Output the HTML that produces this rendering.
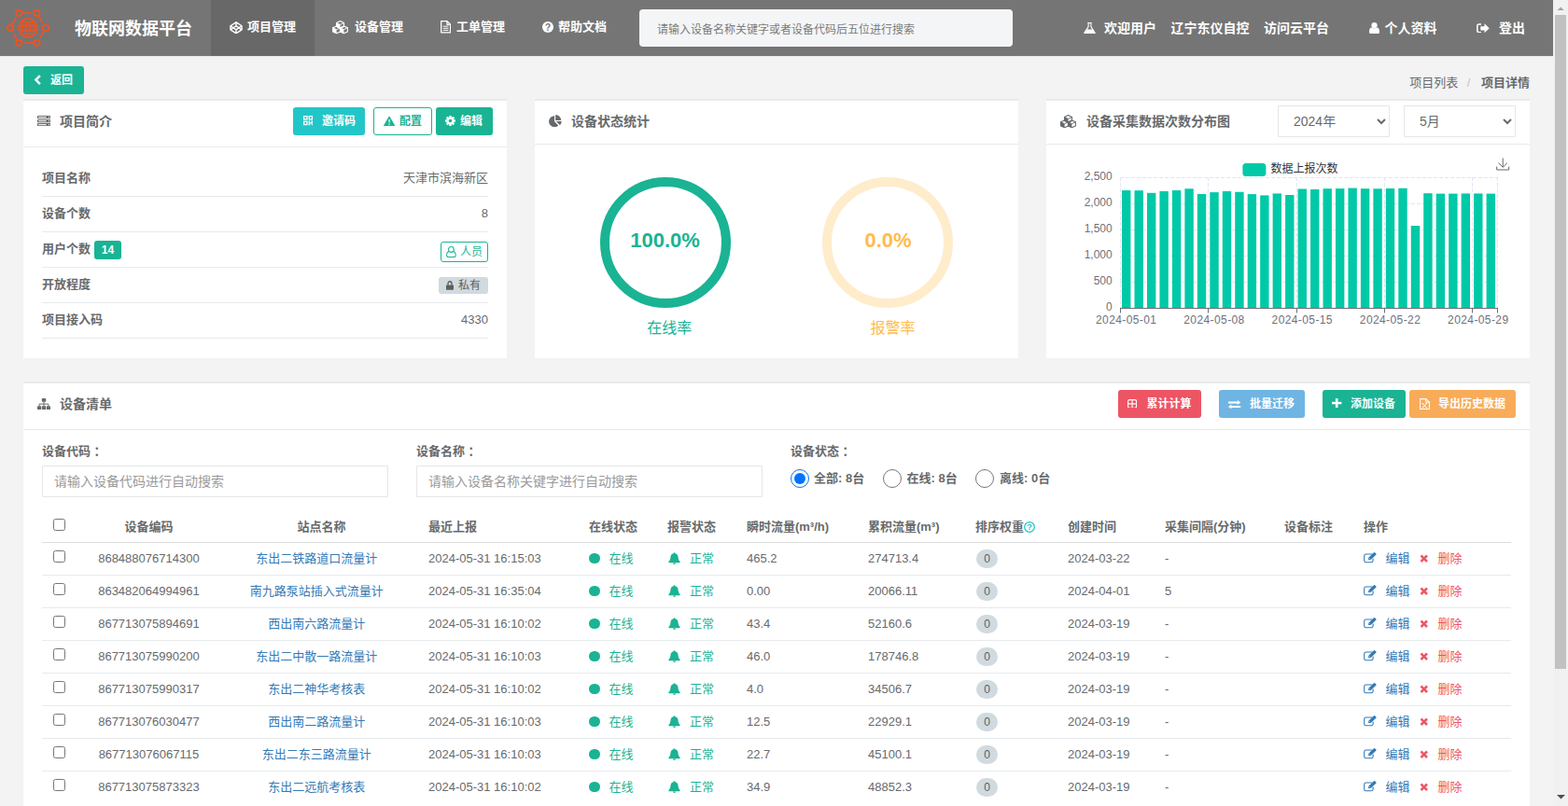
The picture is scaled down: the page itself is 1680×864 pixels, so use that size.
<!DOCTYPE html>
<html lang="zh-CN">
<head>
<meta charset="utf-8">
<title>物联网数据平台 - 项目详情</title>
<style>
*{box-sizing:border-box;margin:0;padding:0}
html,body{width:1680px;height:864px;overflow:hidden}
body{background:#f3f3f4;font-family:"Liberation Sans","Noto Sans CJK SC",sans-serif;font-size:13px;color:#676a6c;position:relative}
svg.ic{display:block;position:absolute}
#nav{position:absolute;left:0;top:0;width:1664px;height:61px;background:#757575;color:#fff;border-bottom:1px solid #e7eaec}
#nav .brand{position:absolute;left:80px;top:1px;line-height:60px;font-size:18px;font-weight:bold;white-space:nowrap}
#nav .item{position:absolute;display:block;color:#fff;top:0;height:60px;line-height:60px;font-size:13px;font-weight:bold;white-space:nowrap}
#nav .item.active{background:#686868}
#nav .item span{position:absolute;top:-1px}
#nav .r{position:absolute;color:#fff;top:0;line-height:60px;font-size:14px;font-weight:bold;white-space:nowrap}
#search{position:absolute;left:685px;top:10px;width:400px;height:40px;border:0;border-radius:4px;background:#f4f5f7;color:#676a6c;font:12px "Liberation Sans","Noto Sans CJK SC",sans-serif;padding:3px 19px 0;outline:0}
#search::placeholder{color:#7b7b7b;opacity:1}
#sb{position:absolute;left:1664px;top:0;width:16px;height:864px;background:#f1f1f1}
#sb .thumb{position:absolute;left:2px;top:16px;width:12px;height:701px;background:#c1c1c1}
.btn{position:absolute;display:block;height:30px;border:0;padding:0;border-radius:3px;color:#fff;font:bold 12px/30px "Liberation Sans","Noto Sans CJK SC",sans-serif;white-space:nowrap;text-align:left}
.btn span{position:absolute;top:0}
.card{position:absolute;background:#fff;border-top:2px solid #e7eaec}
.hline{position:absolute;height:1px;background:#e7eaec}
.title{position:absolute;font-size:14px;font-weight:bold;line-height:20px;white-space:nowrap;color:#676a6c}
#crumb{position:absolute;top:79px;right:41px;line-height:20px;font-size:13px;white-space:nowrap}
.t{position:absolute;white-space:nowrap}
.lbl{position:absolute;font-weight:bold;font-size:13px;line-height:20px;white-space:nowrap}
.val{position:absolute;right:20px;font-size:13px;line-height:20px;white-space:nowrap;text-align:right}
select.sel{position:absolute;top:5px;width:120px;height:34px;border:1px solid #e5e6e7;border-radius:1px;background:#fff;font:14px "Liberation Sans","Noto Sans CJK SC",sans-serif;padding:6px 12px;color:#676a6c;outline:0}
input.inp{position:absolute;top:88px;width:371px;height:34px;border:1px solid #e5e6e7;border-radius:1px;background:#fff;font:14px "Liberation Sans","Noto Sans CJK SC",sans-serif;padding:6px 12px;color:#676a6c;outline:0}
input.inp::placeholder{color:#9a9a9a;opacity:1}
input.radio{position:absolute;width:20px;height:20px;margin:0}
table{position:absolute;left:20px;top:134px;width:1574px;border-collapse:separate;border-spacing:0;table-layout:fixed;font-size:13px}
th,td{padding:0 8px;text-align:left;white-space:nowrap;overflow:visible;position:relative}
th{height:37px;padding-top:3px;line-height:33px;font-weight:bold;border-bottom:1px solid #ddd;vertical-align:top}
td{height:35px;line-height:33px;border-bottom:1px solid #e7eaec;vertical-align:top}
tbody tr:last-child td{border-bottom-color:transparent}
.c{text-align:center}
.colon{margin-left:3.5px}
input.cb{position:absolute;left:12px;width:13px;height:13px;margin:0}
a{color:#337ab7;text-decoration:none}
.g{color:#1ab394}
.red{color:#ed5565}
.dot{position:absolute;left:8.4px;top:10.8px;width:11.4px;height:11.4px;border-radius:50%;background:#1ab394}
.pill{position:absolute;left:9px;top:7px;width:23px;height:20px;border-radius:10px;background:#d1dade;color:#5e5e5e;font-size:12px;line-height:20px;text-align:center}
</style>
</head>
<body>
<nav id="nav"><svg class="ic" style="left:0;top:0" width="60" height="60" viewBox="0 0 60 60"><line x1="24.00" y1="14.00" x2="33.10" y2="14.00" stroke="#f4511e" stroke-width="1.7"/><line x1="41.25" y1="17.09" x2="45.76" y2="24.60" stroke="#f4511e" stroke-width="1.7"/><line x1="47.15" y1="33.09" x2="42.64" y2="40.60" stroke="#f4511e" stroke-width="1.7"/><line x1="35.80" y1="46.00" x2="26.70" y2="46.00" stroke="#f4511e" stroke-width="1.7"/><line x1="18.58" y1="42.90" x2="14.19" y2="35.43" stroke="#f4511e" stroke-width="1.7"/><line x1="12.82" y1="26.90" x2="17.21" y2="19.43" stroke="#f4511e" stroke-width="1.7"/><circle cx="20.4" cy="14" r="3.2" fill="none" stroke="#f4511e" stroke-width="1.7"/><circle cx="39.4" cy="14" r="3.2" fill="none" stroke="#f4511e" stroke-width="1.7"/><circle cx="49" cy="30" r="3.2" fill="none" stroke="#f4511e" stroke-width="1.7"/><circle cx="39.4" cy="46" r="3.2" fill="none" stroke="#f4511e" stroke-width="1.7"/><circle cx="20.4" cy="46" r="3.2" fill="none" stroke="#f4511e" stroke-width="1.7"/><circle cx="11" cy="30" r="3.2" fill="none" stroke="#f4511e" stroke-width="1.7"/><circle cx="30" cy="30" r="10.7" fill="#f4511e"/><g fill="none" stroke="#757575" stroke-width="0.9"><ellipse cx="30" cy="30" rx="4.4" ry="8.7"/><circle cx="30" cy="30" r="8.7"/><line x1="30" y1="21.3" x2="30" y2="38.7"/><line x1="21.3" y1="30" x2="38.7" y2="30"/><line x1="22.6" y1="25.5" x2="37.4" y2="25.5"/><line x1="22.6" y1="34.5" x2="37.4" y2="34.5"/></g></svg><div class="brand">物联网数据平台</div><a class="item active" style="left:226px;width:111px"><span style="left:39px">项目管理</span></a><a class="item" style="left:337px;width:115px"><span style="left:43px">设备管理</span></a><a class="item" style="left:452px;width:109px"><span style="left:37px">工单管理</span></a><a class="item" style="left:561px;width:109px"><span style="left:37px">帮助文档</span></a><svg class="ic" style="left:245.5px;top:22.6px" width="14" height="13.6" viewBox="0 0 14 14"><g fill="none" stroke="#fff" stroke-width="1.5" stroke-linejoin="round"><path d="M7 0.8 L13.2 4.9 V9.1 L7 13.2 L0.8 9.1 V4.9 Z"/><path d="M0.8 4.9 L7 9.1 L13.2 4.9 M0.8 9.1 L7 4.9 L13.2 9.1 M7 0.8 V4.9 M7 9.1 V13.2"/></g></svg><svg class="ic" style="left:356.3px;top:22.4px" width="17" height="14.4" viewBox="0 0 17 14.4"><path d="M8.5 0.6 L12.5 2.5 V6.6 L8.5 8.5 L4.5 6.6 V2.5Z" fill="none" stroke="#fff" stroke-width="1.1" stroke-linejoin="round"/><path d="M4.5 2.5 L8.5 4.3999999999999995 V8.5 L4.5 6.6Z" fill="#fff"/><path d="M4.5 2.5 L8.5 4.3999999999999995 L12.5 2.5" fill="none" stroke="#fff" stroke-width="0.9"/><path d="M4.6 5.9 L8.6 7.800000000000001 V11.9 L4.6 13.799999999999999 L0.5999999999999996 11.9 V7.800000000000001Z" fill="none" stroke="#fff" stroke-width="1.1" stroke-linejoin="round"/><path d="M0.5999999999999996 7.800000000000001 L4.6 9.7 V13.799999999999999 L0.5999999999999996 11.9Z" fill="#fff"/><path d="M0.5999999999999996 7.800000000000001 L4.6 9.7 L8.6 7.800000000000001" fill="none" stroke="#fff" stroke-width="0.9"/><path d="M12.4 5.9 L16.4 7.800000000000001 V11.9 L12.4 13.799999999999999 L8.4 11.9 V7.800000000000001Z" fill="none" stroke="#fff" stroke-width="1.1" stroke-linejoin="round"/><path d="M8.4 7.800000000000001 L12.4 9.7 V13.799999999999999 L8.4 11.9Z" fill="#fff"/><path d="M8.4 7.800000000000001 L12.4 9.7 L16.4 7.800000000000001" fill="none" stroke="#fff" stroke-width="0.9"/></svg><svg class="ic" style="left:471.6px;top:22.3px" width="11.5" height="13.5" viewBox="0 0 11.5 13.5"><g fill="none" stroke="#fff" stroke-width="1.3" stroke-linejoin="round"><path d="M0.7 0.7 H7 L10.6 4.3 V12.8 H0.7 Z"/><path d="M7 0.7 V4.3 H10.6"/><path d="M2.8 6.2 H8.5 M2.8 8.3 H8.5 M2.8 10.4 H8.5" stroke-width="1"/></g></svg><svg class="ic" style="left:580.5px;top:23.1px" width="12" height="12" viewBox="0 0 12 12"><circle cx="6.0" cy="6.0" r="6.0" fill="#fff"/><text x="6.0" y="9.60" text-anchor="middle" font-family="Liberation Sans, sans-serif" font-weight="bold" font-size="10" fill="#757575">?</text></svg><svg class="ic" style="left:1161px;top:23.8px" width="13" height="12.5" viewBox="0 0 13 12.5"><path d="M4.3 0.5 H8.7 M5.1 0.5 V4.6 L0.9 11 Q0.4 12 1.6 12 H11.4 Q12.6 12 12.1 11 L7.9 4.6 V0.5" fill="none" stroke="#fff" stroke-width="1.1" stroke-linejoin="round"/><path d="M3.5 7.6 H9.5 L12 11.2 Q12.3 12 11.4 12 H1.6 Q0.7 12 1 11.2 Z" fill="#fff"/></svg><svg class="ic" style="left:1467px;top:23.7px" width="11" height="12.5" viewBox="0 0 11 12.5"><circle cx="5.5" cy="3.2" r="3.1" fill="#fff"/><path d="M0 10.2 Q0 5.6 2.6 5.4 Q5.5 7.3 8.4 5.4 Q11 5.6 11 10.2 Q11 12.2 9 12.2 H2 Q0 12.2 0 10.2Z" fill="#fff"/></svg><svg class="ic" style="left:1582.4px;top:24.8px" width="14" height="10.6" viewBox="0 0 14 10.6"><path d="M5 0.9 H2.7 Q0.8 0.9 0.8 2.8 V7.8 Q0.8 9.7 2.7 9.7 H5" fill="none" stroke="#fff" stroke-width="1.5"/><path d="M4.3 3.2 H8.5 V0.3 L13.7 5.3 L8.5 10.3 V7.4 H4.3Z" fill="#fff"/></svg><input id="search" type="text" placeholder="请输入设备名称关键字或者设备代码后五位进行搜索"><a class="r" style="left:1183px">欢迎用户</a><a class="r" style="left:1254.5px">辽宁东仪自控</a><a class="r" style="left:1354px">访问云平台</a><a class="r" style="left:1483.5px">个人资料</a><a class="r" style="left:1606px">登出</a></nav><button type="button" class="btn" style="left:25px;top:71px;width:65px;background:#1ab394"><svg class="ic" style="left:11.3px;top:8.9px" width="9" height="11.5" viewBox="0 0 9 11.5"><path d="M6.9 1.1 L2.4 5.6 L6.9 10.1" fill="none" stroke="#fff" stroke-width="2.5"/></svg><span style="left:29px">返回</span></button><div id="crumb"><span>项目列表</span><span style="color:#c4c4c4;padding:0 11.5px 0 9.5px">/</span><b>项目详情</b></div><div class="card" style="left:25px;top:106px;width:518px;height:278px"><svg class="ic" style="left:14.700000000000003px;top:16.200000000000003px" width="14.4" height="11.2" viewBox="0 0 14.4 11.2"><rect x="0" y="0.00" width="14.4" height="3.1" rx="0.4" fill="#676a6c"/><rect x="1.1" y="1.00" width="8.6" height="1.1" fill="#fff"/><rect x="12" y="1.00" width="1.2" height="1.1" fill="#fff"/><rect x="0" y="4.05" width="14.4" height="3.1" rx="0.4" fill="#676a6c"/><rect x="1.1" y="5.05" width="8.6" height="1.1" fill="#fff"/><rect x="12" y="5.05" width="1.2" height="1.1" fill="#fff"/><rect x="0" y="8.10" width="14.4" height="3.1" rx="0.4" fill="#676a6c"/><rect x="1.1" y="9.10" width="8.6" height="1.1" fill="#fff"/><rect x="12" y="9.10" width="1.2" height="1.1" fill="#fff"/></svg><div class="title" style="left:39px;top:12px">项目简介</div><button type="button" class="btn" style="left:289px;top:7px;width:77px;background:#23c6c8"><svg class="ic" style="left:10.5px;top:9.4px" width="10.4" height="10.4" viewBox="0 0 10.4 10.4"><rect x="0" y="0" width="4.6" height="4.6" fill="#fff"/><rect x="1.3" y="1.3" width="2" height="2" fill="#23c6c8"/><rect x="5.6" y="0" width="4.6" height="4.6" fill="#fff"/><rect x="6.8999999999999995" y="1.3" width="2" height="2" fill="#23c6c8"/><rect x="0" y="5.6" width="4.6" height="4.6" fill="#fff"/><rect x="1.3" y="6.8999999999999995" width="2" height="2" fill="#23c6c8"/><path d="M5.6 5.6 h1.6 v1.6 h1.4 v-1.6 h1.6 v3 h-3 v1.6 h-1.6 Z M8.8 9 h1.4 v1.2 h-1.4Z" fill="#fff"/></svg><span style="left:31px">邀请码</span></button><button type="button" class="btn" style="left:375px;top:7px;width:63px;background:#fff;border:1px solid #1ab394;color:#1ab394;line-height:28px"><svg class="ic" style="left:9.8px;top:7.5px" width="12.2" height="11.4" viewBox="0 0 12.2 11.4"><path d="M6.1 0.6 Q6.1 0.3 6.6 1.0 L12 10.2 Q12.4 11.2 11.4 11.2 H0.8 Q-0.2 11.2 0.2 10.2 L5.6 1.0 Q5.9 0.4 6.1 0.6Z" fill="#1ab394"/><path d="M5.4 3.9 H6.8 L6.6 7.6 H5.6Z M5.4 8.4 H6.8 V9.8 H5.4Z" fill="#fff"/></svg><span style="left:27px">配置</span></button><button type="button" class="btn" style="left:442px;top:7px;width:61px;background:#1ab394"><svg class="ic" style="left:10.3px;top:9.3px" width="11" height="11" viewBox="0 0 11 11"><circle cx="5.5" cy="5.5" r="4" fill="#fff"/><rect x="4.3" y="0.0" width="2.4" height="3" fill="#fff" transform="rotate(0 5.5 5.5)"/><rect x="4.3" y="0.0" width="2.4" height="3" fill="#fff" transform="rotate(45 5.5 5.5)"/><rect x="4.3" y="0.0" width="2.4" height="3" fill="#fff" transform="rotate(90 5.5 5.5)"/><rect x="4.3" y="0.0" width="2.4" height="3" fill="#fff" transform="rotate(135 5.5 5.5)"/><rect x="4.3" y="0.0" width="2.4" height="3" fill="#fff" transform="rotate(180 5.5 5.5)"/><rect x="4.3" y="0.0" width="2.4" height="3" fill="#fff" transform="rotate(225 5.5 5.5)"/><rect x="4.3" y="0.0" width="2.4" height="3" fill="#fff" transform="rotate(270 5.5 5.5)"/><rect x="4.3" y="0.0" width="2.4" height="3" fill="#fff" transform="rotate(315 5.5 5.5)"/><circle cx="5.5" cy="5.5" r="1.8" fill="#1ab394"/></svg><span style="left:26px">编辑</span></button><div class="hline" style="left:0;right:0;top:49px"></div><div class="lbl" style="left:20px;top:73px">项目名称</div><div class="val" style="top:73px">天津市滨海新区</div><div class="hline" style="left:20px;right:20px;top:102px"></div><div class="lbl" style="left:20px;top:111px">设备个数</div><div class="val" style="top:111px">8</div><div class="hline" style="left:20px;right:20px;top:140px"></div><div class="lbl" style="left:20px;top:149px">用户个数</div><div class="hline" style="left:20px;right:20px;top:178px"></div><div class="lbl" style="left:20px;top:187px">开放程度</div><div class="hline" style="left:20px;right:20px;top:216px"></div><div class="lbl" style="left:20px;top:225px">项目接入码</div><div class="val" style="top:225px">4330</div><div class="hline" style="left:20px;right:20px;top:254px"></div><div class="t" style="left:76px;top:150px;width:29px;height:20px;border-radius:3px;background:#1ab394;color:#fff;font-size:12px;font-weight:bold;line-height:20px;text-align:center">14</div><div class="t" style="left:447px;top:151px;width:51px;height:22px;border-radius:3px;border:1px solid #1ab394;color:#1ab394;font-size:12px;line-height:20px"><svg class="ic" style="left:4.5px;top:4px" width="11" height="12.2" viewBox="0 0 11 12.2"><g fill="none" stroke="#1ab394" stroke-width="1.05"><circle cx="5.4" cy="3.5" r="2.9"/><path d="M3.2 5.6 Q0.6 6.2 0.6 9.8 Q0.6 11.6 2.2 11.6 H8.6 Q10.2 11.6 10.2 9.8 Q10.2 6.2 7.6 5.6"/></g></svg><span class="t" style="left:20px;top:0">人员</span></div><div class="t" style="left:445px;top:189px;width:53px;height:18px;border-radius:3px;background:#d1dade;color:#5e5e5e;font-size:12px;line-height:18px"><svg class="ic" style="left:8.3px;top:3.6px" width="8" height="10" viewBox="0 0 8 10"><path d="M2 4.6 V3.2 Q2 0.7 4 0.7 Q6 0.7 6 3.2 V4.6" fill="none" stroke="#5e5e5e" stroke-width="1.4"/><rect x="0" y="4.4" width="8" height="5.4" rx="0.6" fill="#5e5e5e"/></svg><span class="t" style="left:21px;top:0">私有</span></div></div><div class="card" style="left:573px;top:106px;width:518px;height:278px"><svg class="ic" style="left:14.700000000000045px;top:14.700000000000003px" width="14" height="13.6" viewBox="0 0 13 13"><path d="M5.6 1.3 V6.9 L9.6 10.9 A5.65 5.65 0 1 1 5.6 1.3Z" fill="#676a6c"/><path d="M6.7 0 A5.7 5.7 0 0 1 12.4 5.7 H6.7Z" fill="#676a6c"/><path d="M7.4 6.8 H12.9 A5.6 5.6 0 0 1 11.3 10.7Z" fill="#676a6c"/></svg><div class="title" style="left:39px;top:12px">设备状态统计</div><div class="hline" style="left:0;right:0;top:46px"></div><svg class="ic" style="left:69.5px;top:82px" width="140" height="140" viewBox="0 0 140 140"><circle cx="70" cy="70" r="65" fill="none" stroke="#1ab394" stroke-width="10"/></svg><svg class="ic" style="left:308.20000000000005px;top:82px" width="140" height="140" viewBox="0 0 140 140"><circle cx="70" cy="70" r="65" fill="none" stroke="#ffeccb" stroke-width="10"/></svg><div class="t" style="left:69.5px;width:140px;text-align:center;top:135px;line-height:30px;font-size:22px;font-weight:bold;color:#1ab394">100.0%</div><div class="t" style="left:308.5px;width:140px;text-align:center;top:135px;line-height:30px;font-size:22px;font-weight:bold;color:#ffbb4d">0.0%</div><div class="t" style="left:74.29999999999995px;width:140px;text-align:center;top:231.5px;line-height:24px;font-size:16px;color:#1ab394">在线率</div><div class="t" style="left:313.5px;width:140px;text-align:center;top:231.5px;line-height:24px;font-size:16px;color:#ffbb4d">报警率</div></div><div class="card" style="left:1121px;top:106px;width:518px;height:278px"><svg class="ic" style="left:15px;top:14.700000000000003px" width="17" height="14.4" viewBox="0 0 17 14.4"><path d="M8.5 0.6 L12.5 2.5 V6.6 L8.5 8.5 L4.5 6.6 V2.5Z" fill="none" stroke="#676a6c" stroke-width="1.1" stroke-linejoin="round"/><path d="M4.5 2.5 L8.5 4.3999999999999995 V8.5 L4.5 6.6Z" fill="#676a6c"/><path d="M4.5 2.5 L8.5 4.3999999999999995 L12.5 2.5" fill="none" stroke="#676a6c" stroke-width="0.9"/><path d="M4.6 5.9 L8.6 7.800000000000001 V11.9 L4.6 13.799999999999999 L0.5999999999999996 11.9 V7.800000000000001Z" fill="none" stroke="#676a6c" stroke-width="1.1" stroke-linejoin="round"/><path d="M0.5999999999999996 7.800000000000001 L4.6 9.7 V13.799999999999999 L0.5999999999999996 11.9Z" fill="#676a6c"/><path d="M0.5999999999999996 7.800000000000001 L4.6 9.7 L8.6 7.800000000000001" fill="none" stroke="#676a6c" stroke-width="0.9"/><path d="M12.4 5.9 L16.4 7.800000000000001 V11.9 L12.4 13.799999999999999 L8.4 11.9 V7.800000000000001Z" fill="none" stroke="#676a6c" stroke-width="1.1" stroke-linejoin="round"/><path d="M8.4 7.800000000000001 L12.4 9.7 V13.799999999999999 L8.4 11.9Z" fill="#676a6c"/><path d="M8.4 7.800000000000001 L12.4 9.7 L16.4 7.800000000000001" fill="none" stroke="#676a6c" stroke-width="0.9"/></svg><div class="title" style="left:43px;top:12px">设备采集数据次数分布图</div><select class="sel" style="left:248px"><option>2023年</option><option selected>2024年</option></select><select class="sel" style="left:383px"><option>4月</option><option selected>5月</option><option>6月</option></select><div class="hline" style="left:0;right:0;top:46px"></div><svg class="ic" style="left:0;top:48px" width="518" height="228" viewBox="0 0 518 228" font-family="Liberation Sans, Noto Sans CJK SC, sans-serif" font-size="12"><g stroke="#e0e6f1" stroke-width="1" stroke-dasharray="4 2" fill="none"><line x1="79.00" y1="34.50" x2="483.00" y2="34.50"/><line x1="79.00" y1="62.50" x2="483.00" y2="62.50"/><line x1="79.00" y1="90.50" x2="483.00" y2="90.50"/><line x1="79.00" y1="118.50" x2="483.00" y2="118.50"/><line x1="79.00" y1="146.50" x2="483.00" y2="146.50"/><line x1="79.50" y1="34.00" x2="79.50" y2="174.00"/><line x1="173.50" y1="34.00" x2="173.50" y2="174.00"/><line x1="268.50" y1="34.00" x2="268.50" y2="174.00"/><line x1="362.50" y1="34.00" x2="362.50" y2="174.00"/><line x1="456.50" y1="34.00" x2="456.50" y2="174.00"/><line x1="483.50" y1="34.00" x2="483.50" y2="174.00"/></g><g fill="#00c9a7"><rect x="81.03" y="48.05" width="9.4" height="125.95"/><rect x="94.50" y="48.20" width="9.4" height="125.80"/><rect x="107.97" y="50.80" width="9.4" height="123.20"/><rect x="121.43" y="49.00" width="9.4" height="125.00"/><rect x="134.90" y="48.05" width="9.4" height="125.95"/><rect x="148.37" y="46.30" width="9.4" height="127.70"/><rect x="161.83" y="52.00" width="9.4" height="122.00"/><rect x="175.30" y="50.10" width="9.4" height="123.90"/><rect x="188.77" y="49.00" width="9.4" height="125.00"/><rect x="202.23" y="49.75" width="9.4" height="124.25"/><rect x="215.70" y="52.10" width="9.4" height="121.90"/><rect x="229.17" y="53.40" width="9.4" height="120.60"/><rect x="242.63" y="51.45" width="9.4" height="122.55"/><rect x="256.10" y="53.00" width="9.4" height="121.00"/><rect x="269.57" y="46.50" width="9.4" height="127.50"/><rect x="283.03" y="47.00" width="9.4" height="127.00"/><rect x="296.50" y="46.20" width="9.4" height="127.80"/><rect x="309.97" y="46.10" width="9.4" height="127.90"/><rect x="323.43" y="45.60" width="9.4" height="128.40"/><rect x="336.90" y="46.20" width="9.4" height="127.80"/><rect x="350.37" y="46.30" width="9.4" height="127.70"/><rect x="363.83" y="46.00" width="9.4" height="128.00"/><rect x="377.30" y="45.80" width="9.4" height="128.20"/><rect x="390.77" y="86.00" width="9.4" height="88.00"/><rect x="404.23" y="51.20" width="9.4" height="122.80"/><rect x="417.70" y="51.60" width="9.4" height="122.40"/><rect x="431.17" y="51.60" width="9.4" height="122.40"/><rect x="444.63" y="51.45" width="9.4" height="122.55"/><rect x="458.10" y="51.45" width="9.4" height="122.55"/><rect x="471.57" y="51.60" width="9.4" height="122.40"/></g><g stroke="#6e7079" stroke-width="1" fill="none"><line x1="79.00" y1="174.50" x2="484.00" y2="174.50"/><line x1="79.50" y1="174.00" x2="79.50" y2="179.50"/><line x1="173.50" y1="174.00" x2="173.50" y2="179.50"/><line x1="268.50" y1="174.00" x2="268.50" y2="179.50"/><line x1="362.50" y1="174.00" x2="362.50" y2="179.50"/><line x1="456.50" y1="174.00" x2="456.50" y2="179.50"/><line x1="483.50" y1="174.00" x2="483.50" y2="179.50"/></g><g fill="#6e7079" text-anchor="end"><text x="70.70" y="37.00">2,500</text><text x="70.70" y="65.00">2,000</text><text x="70.70" y="93.00">1,500</text><text x="70.70" y="121.00">1,000</text><text x="70.70" y="149.00">500</text><text x="70.70" y="177.00">0</text></g><g fill="#6e7079" text-anchor="middle" letter-spacing="0.4"><text x="85.73" y="191.30">2024-05-01</text><text x="180.00" y="191.30">2024-05-08</text><text x="274.27" y="191.30">2024-05-15</text><text x="368.53" y="191.30">2024-05-22</text><text x="462.80" y="191.30">2024-05-29</text></g><rect x="210.40" y="19.00" width="25" height="14" rx="3.5" fill="#00c9a7"/><text x="240.50" y="29.00" fill="#333">数据上报次数</text><g stroke="#666" stroke-width="1" fill="none" transform="translate(482.20,13.50)"><path d="M7 0 V9.5 M2.3 5.2 L7 9.8 L11.7 5.2 M0.5 9 V12.5 H13.5 V9"/></g></svg></div><div class="card" style="left:25px;top:409px;width:1614px;height:520px"><svg class="ic" style="left:15px;top:16px" width="14" height="12" viewBox="0 0 14 12"><g fill="#676a6c"><rect x="4.8" y="0" width="4.4" height="3.8" rx="0.5"/><rect x="0" y="8.2" width="4.2" height="3.8" rx="0.5"/><rect x="4.9" y="8.2" width="4.2" height="3.8" rx="0.5"/><rect x="9.8" y="8.2" width="4.2" height="3.8" rx="0.5"/></g><path d="M7 3.6 V8.4 M2.1 8.4 V6.1 H11.9 V8.4" fill="none" stroke="#676a6c" stroke-width="1"/></svg><div class="title" style="left:39px;top:12px">设备清单</div><button type="button" class="btn" style="left:1173px;top:7px;width:89px;background:#ed5565"><svg class="ic" style="left:10.3px;top:9.5px" width="10.2" height="9.8" viewBox="0 0 10.2 9.8"><g fill="none" stroke="#fff" stroke-width="1.1"><rect x="0.6" y="0.6" width="9" height="8.6" rx="1.7"/><path d="M5.1 0.6 V9.2 M0.6 4.9 H9.6"/></g></svg><span style="left:30.4px">累计计算</span></button><button type="button" class="btn" style="left:1281px;top:7px;width:92px;background:#6eb5e4"><svg class="ic" style="left:10.4px;top:10.6px" width="13.2" height="9.4" viewBox="0 0 13.2 9.4"><path d="M0 1.5 H9.8 V0 L13.2 2.45 L9.8 4.9 V3.4 H0Z M13.2 6 H3.4 V4.5 L0 6.95 L3.4 9.4 V7.9 H13.2Z" fill="#fff"/></svg><span style="left:33px">批量迁移</span></button><button type="button" class="btn" style="left:1392px;top:7px;width:89px;background:#1ab394"><svg class="ic" style="left:10.3px;top:9.4px" width="10.4" height="10" viewBox="0 0 10.4 10"><path d="M3.9 0 H6.5 V3.7 H10.4 V6.3 H6.5 V10 H3.9 V6.3 H0 V3.7 H3.9Z" fill="#fff"/></svg><span style="left:30px">添加设备</span></button><button type="button" class="btn" style="left:1485px;top:7px;width:114px;background:#f8ac59"><svg class="ic" style="left:10.7px;top:8.8px" width="11" height="12" viewBox="0 0 11 12"><g fill="none" stroke="#fff" stroke-width="1.05" stroke-linejoin="round"><path d="M0.6 0.6 H6.8 L10.4 4.2 V11.4 H0.6 Z"/><path d="M6.8 0.6 V4.2 H10.4"/><path d="M3.3 5.6 L7.3 10 M7.3 5.6 L3.3 10 M2.6 5.6 H4.2 M6.4 5.6 H8 M2.6 10 H4.2 M6.4 10 H8" stroke-width="0.95"/></g></svg><span style="left:31px">导出历史数据</span></button><div class="hline" style="left:0;right:0;top:49px"></div><div class="lbl" style="left:20px;top:63px">设备代码<span class="colon">：</span></div><div class="lbl" style="left:421px;top:63px">设备名称<span class="colon">：</span></div><div class="lbl" style="left:822px;top:63px">设备状态<span class="colon">：</span></div><input type="text" class="inp" style="left:20px" placeholder="请输入设备代码进行自动搜索"><input type="text" class="inp" style="left:421px" placeholder="请输入设备名称关键字进行自动搜索"><input type="radio" name="st" class="radio" style="left:822px;top:92px" checked><label class="lbl" style="left:847px;top:92px">全部: 8台</label><input type="radio" name="st" class="radio" style="left:921px;top:92px"><label class="lbl" style="left:946.5px;top:92px">在线: 8台</label><input type="radio" name="st" class="radio" style="left:1020px;top:92px"><label class="lbl" style="left:1046px;top:92px">离线: 0台</label><table><colgroup><col style="width:36px"><col style="width:156.8px"><col style="width:213.2px"><col style="width:172px"><col style="width:84px"><col style="width:85px"><col style="width:130px"><col style="width:115px"><col style="width:99px"><col style="width:104px"><col style="width:128px"><col style="width:85px"><col style="width:166px"></colgroup><thead><tr><th><input type="checkbox" class="cb" style="top:11px"></th><th class="c">设备编码</th><th class="c">站点名称</th><th>最近上报</th><th>在线状态</th><th>报警状态</th><th>瞬时流量(m³/h)</th><th>累积流量(m³)</th><th>排序权重<svg class="ic" style="left:60px;top:14px" width="12" height="12" viewBox="0 0 12 12"><circle cx="6.0" cy="6.0" r="5.3" fill="none" stroke="#23c6c8" stroke-width="1.3"/><text x="6.0" y="9.24" text-anchor="middle" font-family="Liberation Sans, sans-serif" font-weight="bold" font-size="9" fill="#23c6c8">?</text></svg></th><th>创建时间</th><th>采集间隔(分钟)</th><th>设备标注</th><th>操作</th></tr></thead><tbody><tr><td><input type="checkbox" class="cb" style="top:8px"></td><td class="c">868488076714300</td><td class="c" style="padding-right:18.5px"><a>东出二铁路道口流量计</a></td><td>2024-05-31 16:15:03</td><td class="g"><span class="dot"></span><span class="t" style="left:29.5px">在线</span></td><td class="g"><svg class="ic" style="left:9.2px;top:9.8px" width="13" height="13" viewBox="0 0 13 13"><path d="M6.5 0.3 Q7.4 0.3 7.4 1.3 Q10.6 2.1 10.6 5.8 Q10.6 8.8 12.8 10.4 Q12.8 11.2 12 11.2 H1 Q0.2 11.2 0.2 10.4 Q2.4 8.8 2.4 5.8 Q2.4 2.1 5.6 1.3 Q5.6 0.3 6.5 0.3Z" fill="#1ab394"/><path d="M4.9 11.6 H8.1 Q8.1 13 6.5 13 Q4.9 13 4.9 11.6Z" fill="#1ab394"/></svg><span class="t" style="left:32px">正常</span></td><td>465.2</td><td>274713.4</td><td><span class="pill">0</span></td><td>2024-03-22</td><td>-</td><td></td><td><svg class="ic" style="left:8.2px;top:10.3px" width="14" height="11.5" viewBox="0 0 14 11.5"><path d="M9.2 2 H2.6 Q0.7 2 0.7 3.9 V8.9 Q0.7 10.8 2.6 10.8 H8.2 Q10.1 10.8 10.1 8.9 V6.6" fill="none" stroke="#337ab7" stroke-width="1.1"/><path d="M5 8.1 L5.3 5.8 L11 0.3 Q11.6 -0.2 12.3 0.4 L13.3 1.4 Q13.8 2.1 13.3 2.7 L7.6 8.1 Z" fill="#337ab7"/><path d="M6.1 6.3 L6.9 7.1" stroke="#fff" stroke-width="0.8"/></svg><a class="t" style="left:31.5px">编辑</a><svg class="ic" style="left:67.7px;top:11.8px" width="9.5" height="9.5" viewBox="0 0 9.5 9.5"><path d="M1.5 1.5 L8 8 M8 1.5 L1.5 8" fill="none" stroke="#ed5565" stroke-width="2.6"/></svg><span class="t red" style="left:87.5px">删除</span></td></tr><tr><td><input type="checkbox" class="cb" style="top:8px"></td><td class="c">863482064994961</td><td class="c" style="padding-right:18.5px"><a>南九路泵站插入式流量计</a></td><td>2024-05-31 16:35:04</td><td class="g"><span class="dot"></span><span class="t" style="left:29.5px">在线</span></td><td class="g"><svg class="ic" style="left:9.2px;top:9.8px" width="13" height="13" viewBox="0 0 13 13"><path d="M6.5 0.3 Q7.4 0.3 7.4 1.3 Q10.6 2.1 10.6 5.8 Q10.6 8.8 12.8 10.4 Q12.8 11.2 12 11.2 H1 Q0.2 11.2 0.2 10.4 Q2.4 8.8 2.4 5.8 Q2.4 2.1 5.6 1.3 Q5.6 0.3 6.5 0.3Z" fill="#1ab394"/><path d="M4.9 11.6 H8.1 Q8.1 13 6.5 13 Q4.9 13 4.9 11.6Z" fill="#1ab394"/></svg><span class="t" style="left:32px">正常</span></td><td>0.00</td><td>20066.11</td><td><span class="pill">0</span></td><td>2024-04-01</td><td>5</td><td></td><td><svg class="ic" style="left:8.2px;top:10.3px" width="14" height="11.5" viewBox="0 0 14 11.5"><path d="M9.2 2 H2.6 Q0.7 2 0.7 3.9 V8.9 Q0.7 10.8 2.6 10.8 H8.2 Q10.1 10.8 10.1 8.9 V6.6" fill="none" stroke="#337ab7" stroke-width="1.1"/><path d="M5 8.1 L5.3 5.8 L11 0.3 Q11.6 -0.2 12.3 0.4 L13.3 1.4 Q13.8 2.1 13.3 2.7 L7.6 8.1 Z" fill="#337ab7"/><path d="M6.1 6.3 L6.9 7.1" stroke="#fff" stroke-width="0.8"/></svg><a class="t" style="left:31.5px">编辑</a><svg class="ic" style="left:67.7px;top:11.8px" width="9.5" height="9.5" viewBox="0 0 9.5 9.5"><path d="M1.5 1.5 L8 8 M8 1.5 L1.5 8" fill="none" stroke="#ed5565" stroke-width="2.6"/></svg><span class="t red" style="left:87.5px">删除</span></td></tr><tr><td><input type="checkbox" class="cb" style="top:8px"></td><td class="c">867713075894691</td><td class="c" style="padding-right:18.5px"><a>西出南六路流量计</a></td><td>2024-05-31 16:10:02</td><td class="g"><span class="dot"></span><span class="t" style="left:29.5px">在线</span></td><td class="g"><svg class="ic" style="left:9.2px;top:9.8px" width="13" height="13" viewBox="0 0 13 13"><path d="M6.5 0.3 Q7.4 0.3 7.4 1.3 Q10.6 2.1 10.6 5.8 Q10.6 8.8 12.8 10.4 Q12.8 11.2 12 11.2 H1 Q0.2 11.2 0.2 10.4 Q2.4 8.8 2.4 5.8 Q2.4 2.1 5.6 1.3 Q5.6 0.3 6.5 0.3Z" fill="#1ab394"/><path d="M4.9 11.6 H8.1 Q8.1 13 6.5 13 Q4.9 13 4.9 11.6Z" fill="#1ab394"/></svg><span class="t" style="left:32px">正常</span></td><td>43.4</td><td>52160.6</td><td><span class="pill">0</span></td><td>2024-03-19</td><td>-</td><td></td><td><svg class="ic" style="left:8.2px;top:10.3px" width="14" height="11.5" viewBox="0 0 14 11.5"><path d="M9.2 2 H2.6 Q0.7 2 0.7 3.9 V8.9 Q0.7 10.8 2.6 10.8 H8.2 Q10.1 10.8 10.1 8.9 V6.6" fill="none" stroke="#337ab7" stroke-width="1.1"/><path d="M5 8.1 L5.3 5.8 L11 0.3 Q11.6 -0.2 12.3 0.4 L13.3 1.4 Q13.8 2.1 13.3 2.7 L7.6 8.1 Z" fill="#337ab7"/><path d="M6.1 6.3 L6.9 7.1" stroke="#fff" stroke-width="0.8"/></svg><a class="t" style="left:31.5px">编辑</a><svg class="ic" style="left:67.7px;top:11.8px" width="9.5" height="9.5" viewBox="0 0 9.5 9.5"><path d="M1.5 1.5 L8 8 M8 1.5 L1.5 8" fill="none" stroke="#ed5565" stroke-width="2.6"/></svg><span class="t red" style="left:87.5px">删除</span></td></tr><tr><td><input type="checkbox" class="cb" style="top:8px"></td><td class="c">867713075990200</td><td class="c" style="padding-right:18.5px"><a>东出二中散一路流量计</a></td><td>2024-05-31 16:10:03</td><td class="g"><span class="dot"></span><span class="t" style="left:29.5px">在线</span></td><td class="g"><svg class="ic" style="left:9.2px;top:9.8px" width="13" height="13" viewBox="0 0 13 13"><path d="M6.5 0.3 Q7.4 0.3 7.4 1.3 Q10.6 2.1 10.6 5.8 Q10.6 8.8 12.8 10.4 Q12.8 11.2 12 11.2 H1 Q0.2 11.2 0.2 10.4 Q2.4 8.8 2.4 5.8 Q2.4 2.1 5.6 1.3 Q5.6 0.3 6.5 0.3Z" fill="#1ab394"/><path d="M4.9 11.6 H8.1 Q8.1 13 6.5 13 Q4.9 13 4.9 11.6Z" fill="#1ab394"/></svg><span class="t" style="left:32px">正常</span></td><td>46.0</td><td>178746.8</td><td><span class="pill">0</span></td><td>2024-03-19</td><td>-</td><td></td><td><svg class="ic" style="left:8.2px;top:10.3px" width="14" height="11.5" viewBox="0 0 14 11.5"><path d="M9.2 2 H2.6 Q0.7 2 0.7 3.9 V8.9 Q0.7 10.8 2.6 10.8 H8.2 Q10.1 10.8 10.1 8.9 V6.6" fill="none" stroke="#337ab7" stroke-width="1.1"/><path d="M5 8.1 L5.3 5.8 L11 0.3 Q11.6 -0.2 12.3 0.4 L13.3 1.4 Q13.8 2.1 13.3 2.7 L7.6 8.1 Z" fill="#337ab7"/><path d="M6.1 6.3 L6.9 7.1" stroke="#fff" stroke-width="0.8"/></svg><a class="t" style="left:31.5px">编辑</a><svg class="ic" style="left:67.7px;top:11.8px" width="9.5" height="9.5" viewBox="0 0 9.5 9.5"><path d="M1.5 1.5 L8 8 M8 1.5 L1.5 8" fill="none" stroke="#ed5565" stroke-width="2.6"/></svg><span class="t red" style="left:87.5px">删除</span></td></tr><tr><td><input type="checkbox" class="cb" style="top:8px"></td><td class="c">867713075990317</td><td class="c" style="padding-right:18.5px"><a>东出二神华考核表</a></td><td>2024-05-31 16:10:02</td><td class="g"><span class="dot"></span><span class="t" style="left:29.5px">在线</span></td><td class="g"><svg class="ic" style="left:9.2px;top:9.8px" width="13" height="13" viewBox="0 0 13 13"><path d="M6.5 0.3 Q7.4 0.3 7.4 1.3 Q10.6 2.1 10.6 5.8 Q10.6 8.8 12.8 10.4 Q12.8 11.2 12 11.2 H1 Q0.2 11.2 0.2 10.4 Q2.4 8.8 2.4 5.8 Q2.4 2.1 5.6 1.3 Q5.6 0.3 6.5 0.3Z" fill="#1ab394"/><path d="M4.9 11.6 H8.1 Q8.1 13 6.5 13 Q4.9 13 4.9 11.6Z" fill="#1ab394"/></svg><span class="t" style="left:32px">正常</span></td><td>4.0</td><td>34506.7</td><td><span class="pill">0</span></td><td>2024-03-19</td><td>-</td><td></td><td><svg class="ic" style="left:8.2px;top:10.3px" width="14" height="11.5" viewBox="0 0 14 11.5"><path d="M9.2 2 H2.6 Q0.7 2 0.7 3.9 V8.9 Q0.7 10.8 2.6 10.8 H8.2 Q10.1 10.8 10.1 8.9 V6.6" fill="none" stroke="#337ab7" stroke-width="1.1"/><path d="M5 8.1 L5.3 5.8 L11 0.3 Q11.6 -0.2 12.3 0.4 L13.3 1.4 Q13.8 2.1 13.3 2.7 L7.6 8.1 Z" fill="#337ab7"/><path d="M6.1 6.3 L6.9 7.1" stroke="#fff" stroke-width="0.8"/></svg><a class="t" style="left:31.5px">编辑</a><svg class="ic" style="left:67.7px;top:11.8px" width="9.5" height="9.5" viewBox="0 0 9.5 9.5"><path d="M1.5 1.5 L8 8 M8 1.5 L1.5 8" fill="none" stroke="#ed5565" stroke-width="2.6"/></svg><span class="t red" style="left:87.5px">删除</span></td></tr><tr><td><input type="checkbox" class="cb" style="top:8px"></td><td class="c">867713076030477</td><td class="c" style="padding-right:18.5px"><a>西出南二路流量计</a></td><td>2024-05-31 16:10:03</td><td class="g"><span class="dot"></span><span class="t" style="left:29.5px">在线</span></td><td class="g"><svg class="ic" style="left:9.2px;top:9.8px" width="13" height="13" viewBox="0 0 13 13"><path d="M6.5 0.3 Q7.4 0.3 7.4 1.3 Q10.6 2.1 10.6 5.8 Q10.6 8.8 12.8 10.4 Q12.8 11.2 12 11.2 H1 Q0.2 11.2 0.2 10.4 Q2.4 8.8 2.4 5.8 Q2.4 2.1 5.6 1.3 Q5.6 0.3 6.5 0.3Z" fill="#1ab394"/><path d="M4.9 11.6 H8.1 Q8.1 13 6.5 13 Q4.9 13 4.9 11.6Z" fill="#1ab394"/></svg><span class="t" style="left:32px">正常</span></td><td>12.5</td><td>22929.1</td><td><span class="pill">0</span></td><td>2024-03-19</td><td>-</td><td></td><td><svg class="ic" style="left:8.2px;top:10.3px" width="14" height="11.5" viewBox="0 0 14 11.5"><path d="M9.2 2 H2.6 Q0.7 2 0.7 3.9 V8.9 Q0.7 10.8 2.6 10.8 H8.2 Q10.1 10.8 10.1 8.9 V6.6" fill="none" stroke="#337ab7" stroke-width="1.1"/><path d="M5 8.1 L5.3 5.8 L11 0.3 Q11.6 -0.2 12.3 0.4 L13.3 1.4 Q13.8 2.1 13.3 2.7 L7.6 8.1 Z" fill="#337ab7"/><path d="M6.1 6.3 L6.9 7.1" stroke="#fff" stroke-width="0.8"/></svg><a class="t" style="left:31.5px">编辑</a><svg class="ic" style="left:67.7px;top:11.8px" width="9.5" height="9.5" viewBox="0 0 9.5 9.5"><path d="M1.5 1.5 L8 8 M8 1.5 L1.5 8" fill="none" stroke="#ed5565" stroke-width="2.6"/></svg><span class="t red" style="left:87.5px">删除</span></td></tr><tr><td><input type="checkbox" class="cb" style="top:8px"></td><td class="c">867713076067115</td><td class="c" style="padding-right:18.5px"><a>东出二东三路流量计</a></td><td>2024-05-31 16:10:03</td><td class="g"><span class="dot"></span><span class="t" style="left:29.5px">在线</span></td><td class="g"><svg class="ic" style="left:9.2px;top:9.8px" width="13" height="13" viewBox="0 0 13 13"><path d="M6.5 0.3 Q7.4 0.3 7.4 1.3 Q10.6 2.1 10.6 5.8 Q10.6 8.8 12.8 10.4 Q12.8 11.2 12 11.2 H1 Q0.2 11.2 0.2 10.4 Q2.4 8.8 2.4 5.8 Q2.4 2.1 5.6 1.3 Q5.6 0.3 6.5 0.3Z" fill="#1ab394"/><path d="M4.9 11.6 H8.1 Q8.1 13 6.5 13 Q4.9 13 4.9 11.6Z" fill="#1ab394"/></svg><span class="t" style="left:32px">正常</span></td><td>22.7</td><td>45100.1</td><td><span class="pill">0</span></td><td>2024-03-19</td><td>-</td><td></td><td><svg class="ic" style="left:8.2px;top:10.3px" width="14" height="11.5" viewBox="0 0 14 11.5"><path d="M9.2 2 H2.6 Q0.7 2 0.7 3.9 V8.9 Q0.7 10.8 2.6 10.8 H8.2 Q10.1 10.8 10.1 8.9 V6.6" fill="none" stroke="#337ab7" stroke-width="1.1"/><path d="M5 8.1 L5.3 5.8 L11 0.3 Q11.6 -0.2 12.3 0.4 L13.3 1.4 Q13.8 2.1 13.3 2.7 L7.6 8.1 Z" fill="#337ab7"/><path d="M6.1 6.3 L6.9 7.1" stroke="#fff" stroke-width="0.8"/></svg><a class="t" style="left:31.5px">编辑</a><svg class="ic" style="left:67.7px;top:11.8px" width="9.5" height="9.5" viewBox="0 0 9.5 9.5"><path d="M1.5 1.5 L8 8 M8 1.5 L1.5 8" fill="none" stroke="#ed5565" stroke-width="2.6"/></svg><span class="t red" style="left:87.5px">删除</span></td></tr><tr><td><input type="checkbox" class="cb" style="top:8px"></td><td class="c">867713075873323</td><td class="c" style="padding-right:18.5px"><a>东出二远航考核表</a></td><td>2024-05-31 16:10:02</td><td class="g"><span class="dot"></span><span class="t" style="left:29.5px">在线</span></td><td class="g"><svg class="ic" style="left:9.2px;top:9.8px" width="13" height="13" viewBox="0 0 13 13"><path d="M6.5 0.3 Q7.4 0.3 7.4 1.3 Q10.6 2.1 10.6 5.8 Q10.6 8.8 12.8 10.4 Q12.8 11.2 12 11.2 H1 Q0.2 11.2 0.2 10.4 Q2.4 8.8 2.4 5.8 Q2.4 2.1 5.6 1.3 Q5.6 0.3 6.5 0.3Z" fill="#1ab394"/><path d="M4.9 11.6 H8.1 Q8.1 13 6.5 13 Q4.9 13 4.9 11.6Z" fill="#1ab394"/></svg><span class="t" style="left:32px">正常</span></td><td>34.9</td><td>48852.3</td><td><span class="pill">0</span></td><td>2024-03-19</td><td>-</td><td></td><td><svg class="ic" style="left:8.2px;top:10.3px" width="14" height="11.5" viewBox="0 0 14 11.5"><path d="M9.2 2 H2.6 Q0.7 2 0.7 3.9 V8.9 Q0.7 10.8 2.6 10.8 H8.2 Q10.1 10.8 10.1 8.9 V6.6" fill="none" stroke="#337ab7" stroke-width="1.1"/><path d="M5 8.1 L5.3 5.8 L11 0.3 Q11.6 -0.2 12.3 0.4 L13.3 1.4 Q13.8 2.1 13.3 2.7 L7.6 8.1 Z" fill="#337ab7"/><path d="M6.1 6.3 L6.9 7.1" stroke="#fff" stroke-width="0.8"/></svg><a class="t" style="left:31.5px">编辑</a><svg class="ic" style="left:67.7px;top:11.8px" width="9.5" height="9.5" viewBox="0 0 9.5 9.5"><path d="M1.5 1.5 L8 8 M8 1.5 L1.5 8" fill="none" stroke="#ed5565" stroke-width="2.6"/></svg><span class="t red" style="left:87.5px">删除</span></td></tr></tbody></table></div><div id="sb"><div class="thumb"></div><svg class="ic" style="left:4.3px;top:6.7px" width="8.4" height="4.4" viewBox="0 0 9 5"><path d="M0 5 L4.5 0.5 L9 5Z" fill="#a3a3a3"/></svg><svg class="ic" style="left:4px;top:852px" width="9" height="5" viewBox="0 0 9 5"><path d="M0 0 L4.5 4.5 L9 0Z" fill="#505050"/></svg></div>
</body>
</html>
